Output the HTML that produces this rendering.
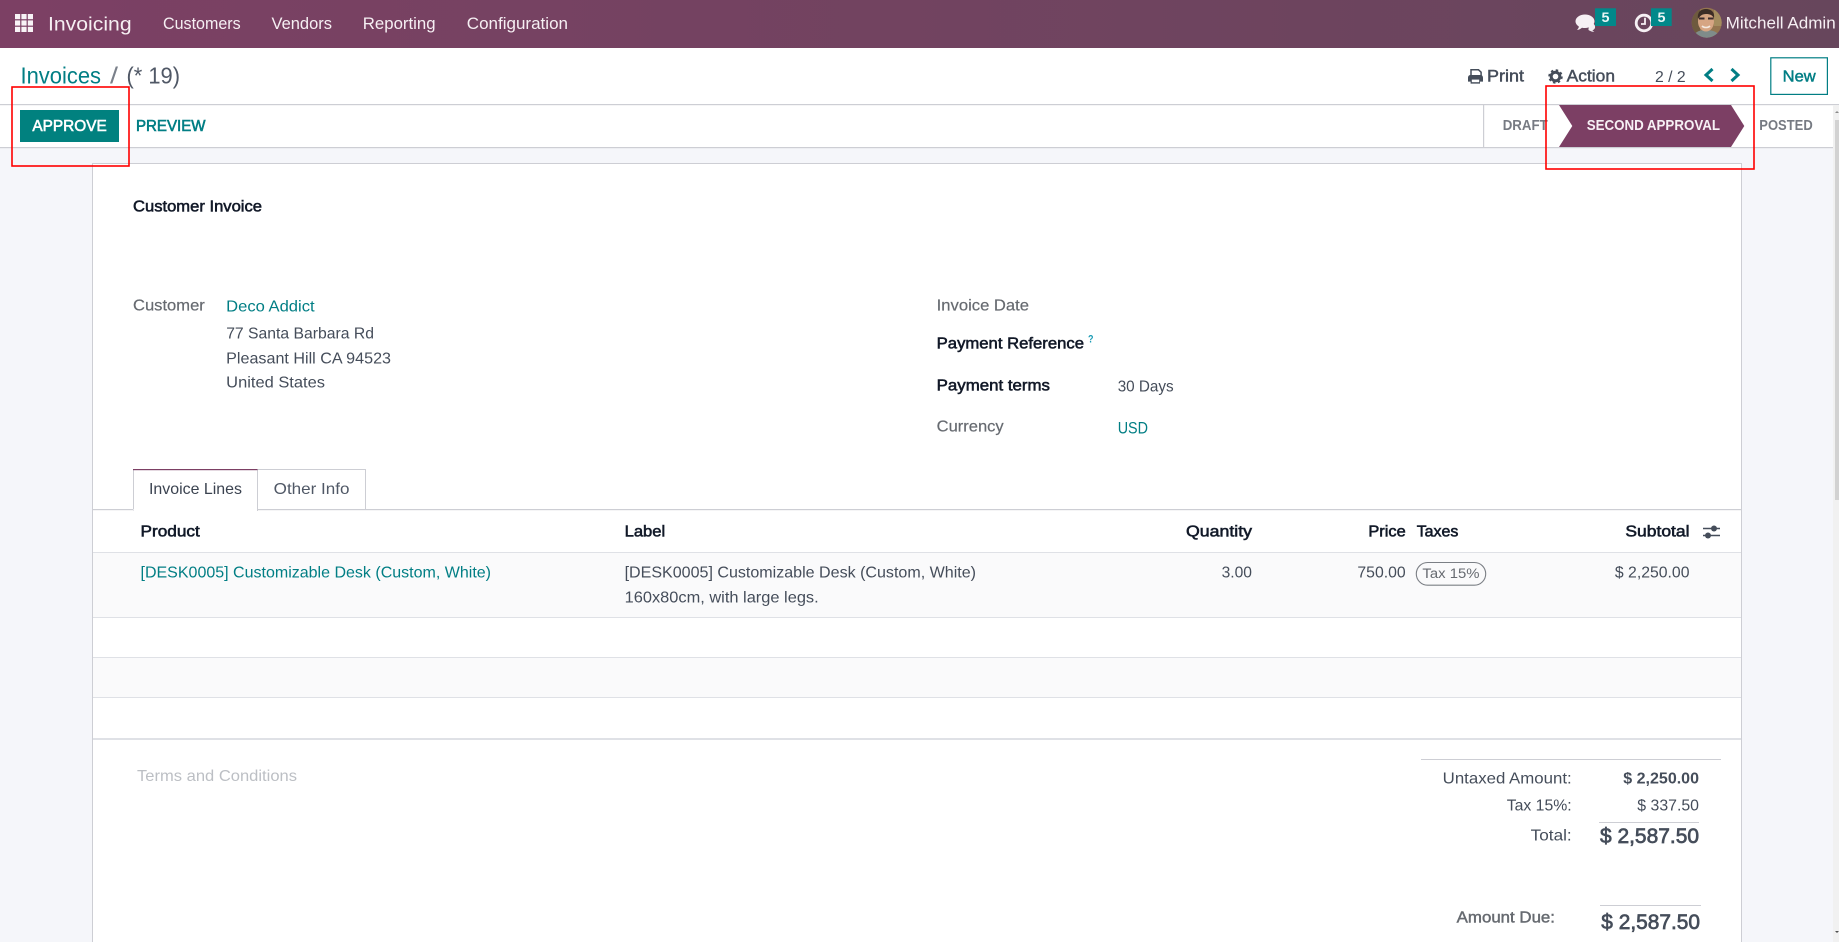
<!DOCTYPE html>
<html lang="en"><head><meta charset="utf-8"><title>Invoices</title>
<style>
html,body{margin:0;padding:0;width:1839px;height:942px;overflow:hidden;background:#f5f6fa}
svg{display:block}
text{font-family:"Liberation Sans",Arial,sans-serif;font-size:16px;fill:#454d5a;white-space:pre}
.w{fill:#f6eff3}
.t{fill:#017e84}
.g{fill:#666a70}
.d{fill:#111827}
.m{stroke:currentColor;stroke-width:.45px;paint-order:stroke}
.b{font-weight:700}
</style></head><body>
<svg xmlns="http://www.w3.org/2000/svg" width="1839" height="942" viewBox="0 0 1839 942">
<defs>
<linearGradient id="nav" x1="0" x2="1" y1="0" y2="0"><stop offset="0" stop-color="#7c4064"/><stop offset="1" stop-color="#67465c"/></linearGradient>
<clipPath id="av"><circle cx="1706.7" cy="22.7" r="15"/></clipPath>
</defs>
<!-- backgrounds -->
<rect width="1839" height="942" fill="#f5f6fa"/>
<rect width="1839" height="48" fill="url(#nav)"/>
<rect y="48" width="1839" height="57" fill="#fff"/>
<rect y="105" width="1839" height="43" fill="#fff"/>
<rect y="104" width="1839" height="1.2" fill="#cdced4"/>
<rect y="147" width="1839" height="1.2" fill="#cdced4"/>

<!-- scrollbar -->
<rect x="1833" y="105" width="6" height="837" fill="#f1f1f1"/>
<rect x="1835" y="120" width="4" height="380" fill="#d2d2d2"/>
<path d="M1837 111l2 2h-4z" fill="#8a8a8a"/>
<path d="M1837 933l2-2h-4z" fill="#505050"/>

<!-- navbar -->
<g fill="#f8f3f6">
<rect x="15" y="14" width="5.2" height="5.2"/><rect x="21.4" y="14" width="5.2" height="5.2"/><rect x="27.8" y="14" width="5.2" height="5.2"/>
<rect x="15" y="20.4" width="5.2" height="5.2"/><rect x="21.4" y="20.4" width="5.2" height="5.2"/><rect x="27.8" y="20.4" width="5.2" height="5.2"/>
<rect x="15" y="26.8" width="5.2" height="5.2"/><rect x="21.4" y="26.8" width="5.2" height="5.2"/><rect x="27.8" y="26.8" width="5.2" height="5.2"/>
</g>
<text class="w" x="48" y="30.5" style="font-size:19.5px" textLength="83.6" lengthAdjust="spacingAndGlyphs">Invoicing</text>
<text class="w" x="163" y="29" style="font-size:17px" textLength="77.7" lengthAdjust="spacingAndGlyphs">Customers</text>
<text class="w" x="271.5" y="29" style="font-size:17px" textLength="60.5" lengthAdjust="spacingAndGlyphs">Vendors</text>
<text class="w" x="362.8" y="29" style="font-size:17px" textLength="72.8" lengthAdjust="spacingAndGlyphs">Reporting</text>
<text class="w" x="466.8" y="29" style="font-size:17px" textLength="101.2" lengthAdjust="spacingAndGlyphs">Configuration</text>

<!-- chat icon -->
<path d="M1589 21c3 1 6.500 3 6.500 6 0 1.600-1 2.800-2.400 3.500l2.400 2c-3-.1-5.400-.8-7.500-2.300z" fill="#f3edf1" stroke="#6a455d" stroke-width=".8"/>
<path d="M1585 14.500c-5.200 0-9.500 3-9.500 6.800 0 2.200 1.400 4 3.400 5.300-.2 1.300-1 2.400-1.900 3.400 2-.3 3.600-1.200 5-2.300 1 .2 2 .3 3 .3 5.200 0 9.500-3 9.500-6.700s-4.300-6.800-9.500-6.800z" fill="#f6f0f4"/>
<rect x="1595" y="8.300" width="21" height="17.700" fill="#01888a"/>
<text x="1601.500" y="22" style="font-size:14px;fill:#eaf6f6;font-weight:700" textLength="8" lengthAdjust="spacingAndGlyphs">5</text>
<!-- clock icon -->
<circle cx="1644" cy="23" r="7.800" fill="none" stroke="#f6f0f4" stroke-width="2.800"/>
<path d="M1645 17.800v6.200h-4" fill="none" stroke="#f6f0f4" stroke-width="1.800"/>
<rect x="1651" y="8.300" width="20.700" height="17.700" fill="#01888a"/>
<text x="1657.500" y="22" style="font-size:14px;fill:#eaf6f6;font-weight:700" textLength="8" lengthAdjust="spacingAndGlyphs">5</text>
<!-- avatar -->
<g clip-path="url(#av)">
<rect x="1690" y="6" width="34" height="34" fill="#94754f"/>
<rect x="1690" y="6" width="10" height="34" fill="#6e5a3e"/>
<rect x="1714" y="6" width="10" height="20" fill="#a48d5f"/>
<path d="M1692 40c1-7 6-10 14-10s14 3 15 10z" fill="#7f8c8a"/>
<ellipse cx="1706" cy="21.500" rx="8" ry="10" fill="#d6a583"/>
<path d="M1698 19c-1-7 3-10 8-10s9 3 8 9c-2-3-4-4-8-4s-6 2-8 5z" fill="#3c2d26"/>
<path d="M1699 18.500h5.500M1708 18.500h5.500" stroke="#3b2c2c" stroke-width="2"/>
<path d="M1702 26c2 2 6 2 8 0" stroke="#f3e8df" stroke-width="1.600" fill="none"/>
</g>
<text class="w" x="1725.700" y="28.500" style="font-size:16.500px" textLength="110" lengthAdjust="spacingAndGlyphs">Mitchell Admin</text>

<!-- breadcrumb -->
<text class="t" x="20.500" y="83.500" style="font-size:23px" textLength="80.500" lengthAdjust="spacingAndGlyphs">Invoices</text>
<text x="110" y="83.500" style="font-size:23px;fill:#7a808a" textLength="8" lengthAdjust="spacingAndGlyphs">/</text>
<text x="126.500" y="83.500" style="font-size:23px;fill:#505866" textLength="53.500" lengthAdjust="spacingAndGlyphs">(* 19)</text>

<!-- print -->
<g fill="#454d5a">
<path d="M1471 76v-6.200h7.500l2.600 2.400v3.800" fill="none" stroke="#454d5a" stroke-width="1.500"/>
<path d="M1468 78c0-2 1-3 2.600-3h10c1.400 0 2.400 1 2.400 3v3.600h-3v2h-9.400v-2h-2.600z"/>
<rect x="1471.800" y="79.600" width="7.400" height="2.600" fill="#fff"/>
</g>
<text x="1487" y="81.700" class="m" style="font-size:16.500px;color:#454d5a" textLength="37" lengthAdjust="spacingAndGlyphs">Print</text>
<!-- gear -->
<circle cx="1555.500" cy="76.500" r="4.300" fill="none" stroke="#454d5a" stroke-width="3"/>
<circle cx="1555.500" cy="76.500" r="6.400" fill="none" stroke="#454d5a" stroke-width="1.700" stroke-dasharray="2.500 2.530"/>
<text x="1566.700" y="81.700" class="m" style="font-size:16.500px;color:#454d5a" textLength="48.300" lengthAdjust="spacingAndGlyphs">Action</text>
<text x="1655" y="82" textLength="30.700" lengthAdjust="spacingAndGlyphs">2 / 2</text>
<path d="M1712.500 69l-6.500 6 6.500 6" fill="none" stroke="#017e84" stroke-width="3"/>
<path d="M1731.500 69l6.500 6-6.500 6" fill="none" stroke="#017e84" stroke-width="3"/>
<rect x="1770.800" y="57.800" width="56.600" height="36.600" fill="#fff" stroke="#017e84" stroke-width="1.200"/>
<text class="t m" x="1782.700" y="81.700" style="color:#017e84" textLength="33" lengthAdjust="spacingAndGlyphs">New</text>

<!-- toolbar buttons -->
<rect x="20" y="110" width="99" height="32" fill="#01817f"/>
<text x="32.400" y="131" class="m" style="fill:#fff;color:#fff;font-size:16px;stroke-width:.6px" textLength="74.300" lengthAdjust="spacingAndGlyphs">APPROVE</text>
<text class="t m" x="136" y="131" style="color:#017e84;font-size:16px;stroke-width:.6px" textLength="69.500" lengthAdjust="spacingAndGlyphs">PREVIEW</text>

<!-- statusbar -->
<rect x="1483" y="105" width="1.200" height="42" fill="#cdced4"/>
<text class="b" x="1502.700" y="130" style="font-size:14.500px;fill:#767a82" textLength="45" lengthAdjust="spacingAndGlyphs">DRAFT</text>
<polygon points="1559,105 1731,105 1744.300,126 1731,147 1559,147 1572.300,126" fill="#7c3f64"/>
<text class="b" x="1586.700" y="130" style="font-size:14.500px;fill:#f7f1f5" textLength="133.300" lengthAdjust="spacingAndGlyphs">SECOND APPROVAL</text>
<text class="b" x="1759.300" y="130" style="font-size:14.500px;fill:#767a82" textLength="53.400" lengthAdjust="spacingAndGlyphs">POSTED</text>

<!-- card -->
<rect x="92.500" y="163.500" width="1649" height="790" fill="#fff" stroke="#cdced4" stroke-width="1"/>

<text class="d m" x="133" y="211.500" style="color:#111827;stroke-width:.55px" textLength="129" lengthAdjust="spacingAndGlyphs">Customer Invoice</text>

<text class="g m" x="133" y="310.700" style="color:#666a70;stroke-width:.2px" textLength="71.800" lengthAdjust="spacingAndGlyphs">Customer</text>
<text class="t" x="226.200" y="311.700" textLength="88.400" lengthAdjust="spacingAndGlyphs">Deco Addict</text>
<text x="226.200" y="338.700" textLength="147.800" lengthAdjust="spacingAndGlyphs">77 Santa Barbara Rd</text>
<text x="226.200" y="363.700" textLength="164.800" lengthAdjust="spacingAndGlyphs">Pleasant Hill CA 94523</text>
<text x="226.200" y="387.700" textLength="98.800" lengthAdjust="spacingAndGlyphs">United States</text>

<text class="g m" x="936.700" y="310.700" style="color:#666a70;stroke-width:.2px" textLength="92.300" lengthAdjust="spacingAndGlyphs">Invoice Date</text>
<text class="d m" x="936.700" y="348.300" style="color:#111827;stroke-width:.55px" textLength="147.300" lengthAdjust="spacingAndGlyphs">Payment Reference</text>
<text x="1088" y="342.500" class="b" style="font-size:11px;fill:#1a9bb5" textLength="5.500" lengthAdjust="spacingAndGlyphs">?</text>
<text class="d m" x="936.700" y="390.700" style="color:#111827;stroke-width:.55px" textLength="113.300" lengthAdjust="spacingAndGlyphs">Payment terms</text>
<text x="1117.700" y="391.700" textLength="56" lengthAdjust="spacingAndGlyphs">30 Days</text>
<text class="g m" x="936.700" y="431.700" style="color:#666a70;stroke-width:.2px" textLength="67" lengthAdjust="spacingAndGlyphs">Currency</text>
<text class="t" x="1117.700" y="433.300" style="font-size:17px" textLength="30.300" lengthAdjust="spacingAndGlyphs">USD</text>

<!-- tabs -->
<rect x="93" y="509" width="1648" height="1.200" fill="#cdced4"/>
<rect x="133.500" y="469.500" width="124" height="41" fill="#fff" stroke="#cdced4" stroke-width="1"/>
<rect x="133.500" y="509" width="123.500" height="2" fill="#fff"/>
<rect x="133" y="469" width="124.500" height="1.200" fill="#7c3f64"/>
<path d="M257.500 469.500H365.500V509" fill="none" stroke="#cdced4" stroke-width="1"/>
<text x="149" y="494" style="fill:#3b4350" textLength="93" lengthAdjust="spacingAndGlyphs">Invoice Lines</text>
<text x="273.700" y="494" style="fill:#505866" textLength="75.800" lengthAdjust="spacingAndGlyphs">Other Info</text>

<!-- table header -->
<text class="d m" x="140.500" y="536.700" style="color:#1f2937;stroke-width:.6px" textLength="59.300" lengthAdjust="spacingAndGlyphs">Product</text>
<text class="d m" x="624.600" y="536.700" style="color:#1f2937;stroke-width:.6px" textLength="40.600" lengthAdjust="spacingAndGlyphs">Label</text>
<text class="d m" x="1186" y="536.700" style="color:#1f2937;stroke-width:.6px" textLength="66" lengthAdjust="spacingAndGlyphs">Quantity</text>
<text class="d m" x="1368.400" y="536.700" style="color:#1f2937;stroke-width:.6px" textLength="37.300" lengthAdjust="spacingAndGlyphs">Price</text>
<text class="d m" x="1416.700" y="536.700" style="color:#1f2937;stroke-width:.6px" textLength="41.700" lengthAdjust="spacingAndGlyphs">Taxes</text>
<text class="d m" x="1625.400" y="536.700" style="color:#1f2937;stroke-width:.6px" textLength="64.100" lengthAdjust="spacingAndGlyphs">Subtotal</text>
<path d="M1703 528.500h17M1703 535.500h17" stroke="#454d5a" stroke-width="1.500"/>
<circle cx="1714" cy="528.500" r="3" fill="#454d5a"/><circle cx="1708" cy="535.500" r="3" fill="#454d5a"/>

<!-- rows -->
<rect x="93" y="552.500" width="1648" height="65" fill="#fafafb"/>
<rect x="93" y="657.500" width="1648" height="40" fill="#fafafb"/>
<g fill="#dfe1e6">
<rect x="93" y="552" width="1648" height="1"/>
<rect x="93" y="617" width="1648" height="1"/>
<rect x="93" y="657" width="1648" height="1"/>
<rect x="93" y="697" width="1648" height="1"/>
<rect x="93" y="738" width="1648" height="2"/>
</g>
<text class="t" x="140.500" y="577.500" textLength="350.500" lengthAdjust="spacingAndGlyphs">[DESK0005] Customizable Desk (Custom, White)</text>
<text x="624.600" y="577.500" textLength="351.400" lengthAdjust="spacingAndGlyphs">[DESK0005] Customizable Desk (Custom, White)</text>
<text x="624.600" y="602.700" textLength="194.100" lengthAdjust="spacingAndGlyphs">160x80cm, with large legs.</text>
<text x="1221.600" y="577.500" textLength="30.400" lengthAdjust="spacingAndGlyphs">3.00</text>
<text x="1357.400" y="577.500" textLength="48.300" lengthAdjust="spacingAndGlyphs">750.00</text>
<rect x="1416.300" y="562.500" width="69.400" height="22.700" rx="11.300" fill="none" stroke="#7b7f85" stroke-width="1.100"/>
<text x="1422.400" y="578" style="font-size:13.500px;fill:#666a70" textLength="57.100" lengthAdjust="spacingAndGlyphs">Tax 15%</text>
<text x="1614.900" y="577.500" textLength="74.600" lengthAdjust="spacingAndGlyphs">$ 2,250.00</text>

<!-- notes -->
<text x="137" y="781" style="fill:#bcbfc4" textLength="160" lengthAdjust="spacingAndGlyphs">Terms and Conditions</text>

<!-- totals -->
<rect x="1421" y="759" width="300" height="1" fill="#cdced4"/>
<text x="1442.700" y="783.500" textLength="129" lengthAdjust="spacingAndGlyphs">Untaxed Amount:</text>
<text x="1623.300" y="783.500" class="b" textLength="75.700" lengthAdjust="spacingAndGlyphs">$ 2,250.00</text>
<text x="1506.700" y="810.500" textLength="65" lengthAdjust="spacingAndGlyphs">Tax 15%:</text>
<text x="1637.300" y="810.500" textLength="61.700" lengthAdjust="spacingAndGlyphs">$ 337.50</text>
<rect x="1599" y="822" width="100" height="1" fill="#cdced4"/>
<text x="1530.700" y="840.500" textLength="41" lengthAdjust="spacingAndGlyphs">Total:</text>
<text x="1600" y="843" class="m" style="font-size:21px;color:#454d5a;stroke-width:.7px" textLength="99" lengthAdjust="spacingAndGlyphs">$ 2,587.50</text>
<rect x="1600" y="905" width="101" height="1" fill="#cdced4"/>
<text class="g m" x="1456.700" y="922.500" style="color:#666a70" textLength="98.300" lengthAdjust="spacingAndGlyphs">Amount Due:</text>
<text x="1601.300" y="929" class="m" style="font-size:21px;color:#454d5a;stroke-width:.7px" textLength="98.700" lengthAdjust="spacingAndGlyphs">$ 2,587.50</text>

<!-- red annotation boxes -->
<rect x="12" y="87" width="117" height="79" fill="none" stroke="#f00" stroke-width="1.600"/>
<rect x="1546" y="86" width="208" height="83" fill="none" stroke="#f00" stroke-width="1.600"/>
</svg>
</body></html>
